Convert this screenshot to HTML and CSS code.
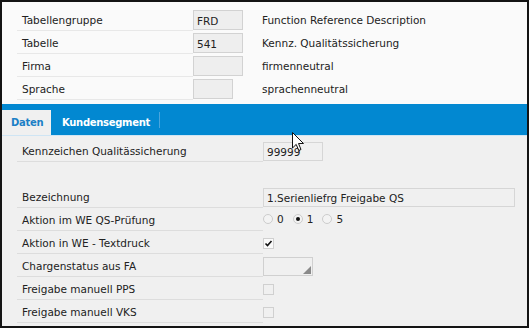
FILE: index.html
```html
<!DOCTYPE html>
<html lang="de">
<head>
  <meta charset="UTF-8">
  <title>Tabellenpflege</title>
  <link rel="stylesheet" href="styles.css">
</head>
<body>
  <div class="window">
    <!-- Kopfbereich mit Schlüsselfeldern -->
    <div class="header">
      <div class="hrow">
        <div class="hlabel">Tabellengruppe</div>
        <div class="hval"><span class="field w50">FRD</span></div>
        <div class="hdesc">Function Reference Description</div>
      </div>
      <div class="hrow">
        <div class="hlabel">Tabelle</div>
        <div class="hval"><span class="field w50">541</span></div>
        <div class="hdesc">Kennz. Qualitätssicherung</div>
      </div>
      <div class="hrow">
        <div class="hlabel">Firma</div>
        <div class="hval"><span class="field w50"></span></div>
        <div class="hdesc">firmenneutral</div>
      </div>
      <div class="hrow">
        <div class="hlabel">Sprache</div>
        <div class="hval"><span class="field w40"></span></div>
        <div class="hdesc">sprachenneutral</div>
      </div>
    </div>

    <!-- Reiter -->
    <div class="tabbar">
      <div class="tab active">Daten</div>
      <div class="tab">Kundensegment</div>
      <div class="tab-sep"></div>
    </div>

    <!-- Datenfelder -->
    <div class="content">
      <div class="crow">
        <div class="clabel">Kennzeichen Qualitässicherung</div>
        <div class="cval"><span class="field cfield w60">99999</span></div>
      </div>
      <div class="crow empty"></div>
      <div class="crow">
        <div class="clabel">Bezeichnung</div>
        <div class="cval"><span class="field cfield w252">1.Serienliefrg Freigabe QS</span></div>
      </div>
      <div class="crow">
        <div class="clabel">Aktion im WE QS-Prüfung</div>
        <div class="cval radios">
          <span class="radio"></span><span class="rtext">0</span>
          <span class="radio checked"></span><span class="rtext">1</span>
          <span class="radio"></span><span class="rtext">5</span>
        </div>
      </div>
      <div class="crow">
        <div class="clabel">Aktion in WE - Textdruck</div>
        <div class="cval"><span class="check checked">
          <svg width="9" height="9" viewBox="0 0 9 9"><path d="M1.5 4.5 L3.5 6.5 L7.5 2" fill="none" stroke="#111" stroke-width="1.6"/></svg>
        </span></div>
      </div>
      <div class="crow">
        <div class="clabel">Chargenstatus aus FA</div>
        <div class="cval"><span class="combo"></span></div>
      </div>
      <div class="crow">
        <div class="clabel">Freigabe manuell PPS</div>
        <div class="cval"><span class="check"></span></div>
      </div>
      <div class="crow">
        <div class="clabel">Freigabe manuell VKS</div>
        <div class="cval"><span class="check"></span></div>
      </div>
    </div>

    <!-- Mauszeiger -->
    <svg class="cursor" width="13" height="20" viewBox="0 0 13 20">
      <path d="M0.5 0.5 L0.5 16 L4.2 12.4 L6.8 18.5 L9 17.5 L6.5 11.5 L11.5 11.5 Z" fill="#fff" stroke="#111" stroke-width="1"/>
    </svg>
  </div>
</body>
</html>
```

FILE: styles.css
```css
body {
  margin: 0;
  font-family: "DejaVu Sans", Verdana, sans-serif;
  font-size: 10.5px;
  color: #222;
}

/* Rahmen um das ganze Fenster */
.window {
  position: relative;
  width: 529px;
  height: 328px;
  box-sizing: border-box;
  border: 2px solid #141414;
  background: #f0f0f0;
  overflow: hidden;
}

/* Kopfbereich */
.header {
  background: #fafafa;
  padding: 6px 0 4px 15px;
}

.hrow {
  display: flex;
  height: 23px;
}

.hlabel {
  width: 171px;
  height: 22px;
  line-height: 25px;
  padding-left: 5px;
  border-bottom: 1px solid #e8e8e8;
}

.hval {
  width: 69px;
  padding-top: 2px;
}

.hdesc {
  line-height: 25px;
}

/* Eingabefelder */
.field {
  display: block;
  height: 20px;
  box-sizing: border-box;
  border: 1px solid #d2d2d2;
  background: #eeeeee;
  padding: 0 3px;
  line-height: 20px;
  white-space: nowrap;
}

.cfield {
  height: 19px;
  line-height: 19px;
  background: #f0f0f0;
  border-color: #d6d6d6;
}

.w40 { width: 40px; }
.w50 { width: 50px; }
.w60 { width: 60px; }
.w252 { width: 252px; }

/* Reiterleiste */
.tabbar {
  display: flex;
  align-items: flex-end;
  height: 31px;
  background: #0288d1;
  border-bottom: 1px solid #cfe5f4;
  font-size: 10px;
}

.tab {
  height: 25px;
  line-height: 26px;
  padding-left: 11px;
  width: 97px;
  color: #fff;
  font-weight: bold;
  letter-spacing: -0.3px;
}

.tab.active {
  width: 40px;
  padding-left: 9px;
  background: #f0f0f0;
  color: #1c80c6;
}

.tab-sep {
  width: 1px;
  height: 16px;
  margin-bottom: 7px;
  background: #4aa5dd;
}

/* Datenbereich */
.content {
  padding: 3px 0 0 15px;
}

.crow {
  display: flex;
  height: 23px;
}

.clabel {
  width: 241px;
  height: 22px;
  line-height: 25px;
  padding-left: 5px;
  border-bottom: 1px solid #dddddd;
}

.cval {
  padding-top: 3px;
}

/* Optionsfelder */
.radios {
  display: flex;
  align-items: center;
  height: 17px;
  padding-top: 2px;
}

.radio {
  width: 10px;
  height: 10px;
  box-sizing: border-box;
  border: 1px solid #cccccc;
  border-radius: 50%;
  background: #f3f3f3;
  position: relative;
}

.radio.checked::after {
  content: "";
  position: absolute;
  left: 2px;
  top: 2px;
  width: 4px;
  height: 4px;
  border-radius: 50%;
  background: #111;
}

.rtext {
  margin: 0 9px 0 4px;
}

/* Kontrollkästchen */
.check {
  display: block;
  width: 11px;
  height: 11px;
  box-sizing: border-box;
  border: 1px solid #d0d0d0;
  background: #f0f0f0;
  margin-top: 4px;
}

.check.checked {
  background: #fafafa;
}

.check svg {
  display: block;
}

/* Auswahlfeld */
.combo {
  display: block;
  width: 50px;
  height: 19px;
  box-sizing: border-box;
  border: 1px solid #d0d0d0;
  background: #f0f0f0;
  position: relative;
}

.combo::after {
  content: "";
  position: absolute;
  right: 1px;
  bottom: 1px;
  border-style: solid;
  border-width: 0 0 8px 8px;
  border-color: transparent transparent #8a8a8a transparent;
}

.cursor {
  position: absolute;
  left: 290px;
  top: 130px;
}
```
